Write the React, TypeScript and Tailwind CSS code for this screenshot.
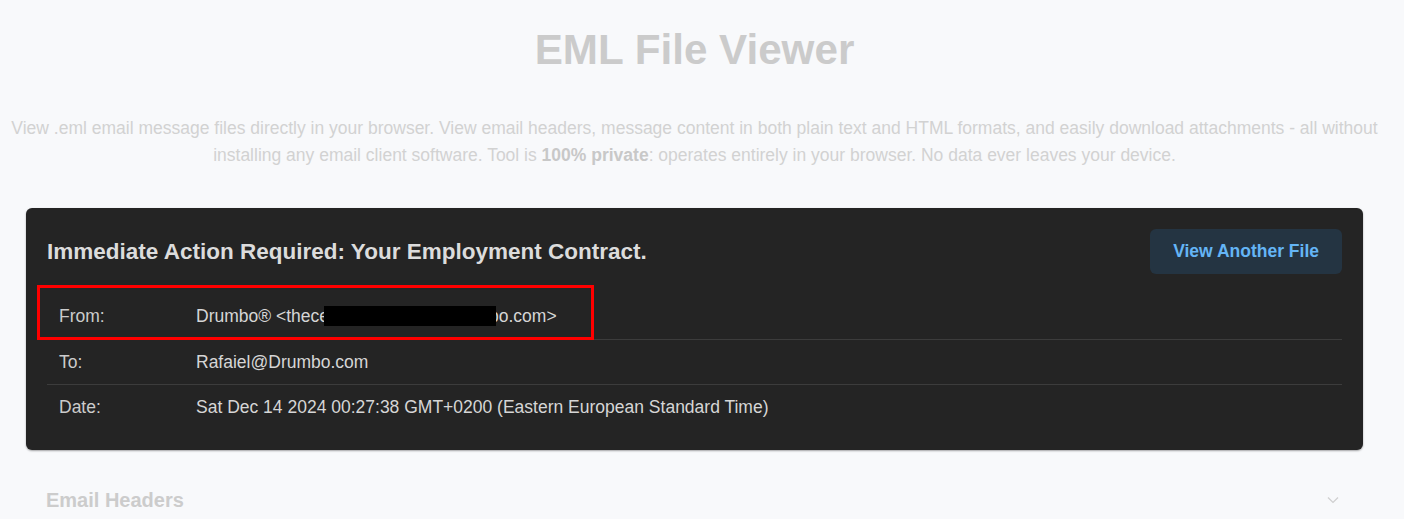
import React from "react";

export default function App() {
  const font = { fontFamily: '"Liberation Sans", Arial, sans-serif' };
  return (
    <div className="min-h-[519px] w-full bg-[#f8f9fb]" style={font}>
      <div className="w-[1389px] pt-[25px]">
        <h1 className="text-center text-[42.2px] font-bold leading-[50px] text-[#cbcbcb]">EML File Viewer</h1>
        <p className="mt-[40px] px-[8px] text-center text-[17.5px] leading-[27px] text-[#d2d2d2]">
          View .eml email message files directly in your browser. View email headers, message content in both plain text and HTML formats, and easily download attachments - all without installing any email client software. Tool is <strong className="font-bold text-[#c8c8c8]">100% private</strong>: operates entirely in your browser. No data ever leaves your device.
        </p>

        <div className="relative mx-[26px] mt-[39px] rounded-md bg-[#242424] px-[21px] pb-[21px] pt-[21px] shadow-[0_1px_2px_rgba(0,0,0,0.35)]">
          <div className="flex h-[45px] items-center justify-between">
            <h2 className="text-[22.5px] font-bold leading-7 text-[#dcdcdc]">Immediate Action Required: Your Employment Contract.</h2>
            <button className="h-[45px] rounded-md bg-[#243442] px-[23px] text-[17.5px] font-bold text-[#64b5f6]">View Another File</button>
          </div>
          <div className="mt-[21px] text-[17.5px] leading-6">
            <div className="flex border-b border-[#3c3c3c] pb-[11px] pt-[9px]">
              <div className="w-[137px] pl-3 text-[#cccccc]">From:</div>
              <div className="pl-3 text-[#d6d6d6]">
                Drumbo® &lt;thece
                <span className="relative z-10 -ml-[5px] -mr-[7px] inline-block h-[20px] w-[172px] bg-black align-[-4px]"></span>
                bo.com&gt;
              </div>
            </div>
            <div className="flex border-b border-[#3c3c3c] py-[10px]">
              <div className="w-[137px] pl-3 text-[#cccccc]">To:</div>
              <div className="pl-3 text-[#d6d6d6]">Rafaiel@Drumbo.com</div>
            </div>
            <div className="flex py-[10px]">
              <div className="w-[137px] pl-3 text-[#cccccc]">Date:</div>
              <div className="pl-3 text-[#d6d6d6]">Sat Dec 14 2024 00:27:38 GMT+0200 (Eastern European Standard Time)</div>
            </div>
          </div>
          <div className="pointer-events-none absolute left-[11px] top-[77px] h-[55px] w-[557px] border-[3px] border-[#ff0000]"></div>
        </div>

        <div className="mx-[26px] mt-[20px] flex items-center justify-between px-[20px] pt-[18px]">
          <h3 className="text-[20px] font-bold leading-6 text-[#cccccc]">Email Headers</h3>
          <svg width="12" height="8" viewBox="0 0 12 8" className="mr-[4px]" fill="none">
            <path d="M1 1.5 L6 6.5 L11 1.5" stroke="#cfcfcf" strokeWidth="1.2" />
          </svg>
        </div>
      </div>
    </div>
  );
}
